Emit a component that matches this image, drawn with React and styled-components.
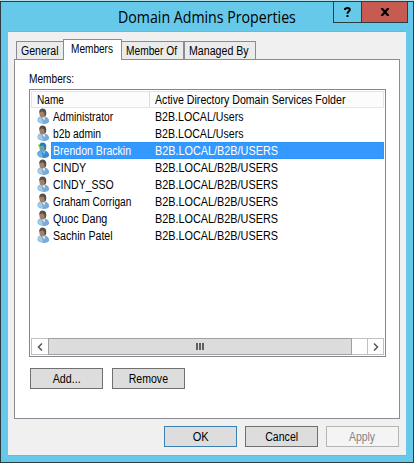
import React from "react";
import styled, { createGlobalStyle } from "styled-components";

const Global = createGlobalStyle`
  *, *::before, *::after { box-sizing: border-box; }
  body { margin: 0; overflow: hidden; background: #fff; }
  button { margin: 0; padding: 0; border-radius: 0; }
`;

const Window = styled.main`
  width: 414px;
  height: 463px;
  padding: 0 7px 6px;
  display: flex;
  flex-direction: column;
  background: #66c9ea;
  border: 1px solid #2d3b43;
  border-top: 0;
  font: 12px/17px "Liberation Sans", Arial, sans-serif;
  color: #000;
`;

const Backdrop = styled.div`
  height: 2px;
  margin: 0 -8px;
  flex: none;
  background: #b9dde4;
  border-bottom: 1px solid #2d3b43;
`;

const TitleBar = styled.header`
  height: 29px;
  margin-right: -2px;
  flex: none;
  display: flex;
  justify-content: flex-end;
  align-items: flex-start;
`;

const Title = styled.h1`
  margin: 0 auto 0 110px;
  width: 180px;
  font: 400 16px/30px "Open Sans", "Noto Sans", sans-serif;
  white-space: nowrap;
  transform: scaleX(0.886);
  transform-origin: left;
`;

const CaptionButton = styled.button`
  width: ${(p) => p.$w}px;
  height: 21px;
  margin-left: -1px;
  border: 1px solid #2d3b43;
  border-top: 0;
  background: ${(p) => p.$bg || "#66c9ea"};
  display: flex;
  align-items: center;
  justify-content: center;
`;

const Client = styled.section`
  flex: 1;
  display: flex;
  flex-direction: column;
  background: #f0f0f0;
  border-top: 1px solid #72b6d0;
  border-bottom: 1px solid #72b6d0;
  padding: 7px 6px 0;
`;

const Tabs = styled.nav`
  display: flex;
  align-items: flex-end;
  height: 20px;
  padding-left: 2px;
  position: relative;
  z-index: 1;
`;

const Tab = styled.button`
  width: ${(p) => p.$w}px;
  height: ${(p) => (p.$active ? 21 : 18)}px;
  margin-left: ${(p) => p.$ml || 0}px;
  margin-bottom: ${(p) => (p.$active ? -1 : 0)}px;
  border: 1px solid #8b8b94;
  border-bottom: 0;
  background: ${(p) => (p.$active ? "#fff" : "#ebebeb")};
  font: inherit;
  color: inherit;
  text-align: left;
  padding: ${(p) => (p.$active ? "0 0 1px 7px" : "1px 0 0 4px")};
`;

const Text = styled.span`
  display: inline-block;
  white-space: pre;
  transform: scaleX(${(p) => p.$sx});
  transform-origin: ${(p) => (p.$center ? "center" : "left")};
`;

const Panel = styled.div`
  height: 360px;
  background: #fff;
  border: 1px solid #8b8b94;
  padding: 11px 13px 0 14px;
`;

const Caption = styled.div`
  height: 18px;
`;

const List = styled.div`
  height: 268px;
  display: flex;
  flex-direction: column;
  border: 1px solid #828790;
  padding: 1px;
`;

const Header = styled.div`
  display: flex;
  height: 17px;
  background: #fcfcfc;
  border: 1px solid #e5e5e5;
`;

const HeaderCell = styled.div`
  width: ${(p) => p.$w}px;
  padding-left: 5px;
  line-height: 17px;
  border-right: ${(p) => (p.$last ? 0 : 1)}px solid #dedede;
`;

const Row = styled.div`
  display: flex;
  height: 17px;
  padding-left: 5px;
`;

const Cells = styled.div`
  flex: 1;
  display: grid;
  grid-template-columns: 102px 1fr;
  padding: 1px 0 0 2px;
  line-height: 17px;
  color: ${(p) => (p.$selected ? "#fff" : "#000")};
  background: ${(p) => (p.$selected ? "#3399ff" : "transparent")};
  outline: ${(p) => (p.$selected ? "1px dotted #b66d2d" : "none")};
  outline-offset: -1px;
`;

const Scrollbar = styled.div`
  margin-top: auto;
  height: 17px;
  display: flex;
  justify-content: space-between;
  border: 1px solid #c0c0c0;
`;

const Arrow = styled.div`
  width: 16px;
  display: flex;
  align-items: center;
  justify-content: center;
  border-left: ${(p) => (p.$right ? "1px solid #c0c0c0" : 0)};
`;

const Thumb = styled.div`
  width: 304px;
  margin: -1px auto -1px 0;
  border: 1px solid #a0a0a0;
  background: #dcdcdc;
  display: flex;
  align-items: center;
  justify-content: center;
`;

const Actions = styled.div`
  display: flex;
  gap: ${(p) => p.$gap}px;
  margin: ${(p) => p.$m};
  justify-content: ${(p) => (p.$end ? "flex-end" : "flex-start")};
`;

const Button = styled.button`
  width: 73px;
  height: 21px;
  line-height: 18px;
  font-family: inherit;
  font-size: 12px;
  border: 1px solid ${(p) => p.$border || "#707070"};
  background: ${(p) => (p.disabled ? "#f4f4f4" : "#ddd")};
  color: ${(p) => (p.disabled ? "#838383" : "#000")};
`;

const UserSvg = styled.svg`
  width: 15px;
  height: 17px;
  flex: none;
`;

function UserIcon({ selected }) {
  return (
    <UserSvg viewBox="0 0 15 17">
      <path d="M1.5 13Q1 9.4 4.5 8.2L9 8.6Q13 9.6 13.2 13.8Q12 16.2 8 15.9Q2.5 15.4 1.5 13Z" fill={selected ? "#3a8bd3" : "#78acd6"} />
      <path d="M2 12.8Q2 9.7 5 8.8L7 15.2Q3 14.8 2 12.8Z" fill={selected ? "#62b5ee" : "#a6cce8"} />
      <path d="M5.5 8.6L9 9.2L8.4 12.4Z" fill={selected ? "#8ac9f4" : "#f4f6f6"} />
      <ellipse cx="6.7" cy="5.2" rx="3.3" ry="4.3" fill={selected ? "#6ba3a5" : "#a58064"} />
      <path d="M3.3 5Q2.8 .4 6.8 .4Q11 .7 10.2 6.4Q9.3 9 8.5 7.5Q8.8 4 6.5 3.5Q4.3 3.2 3.3 5Z" fill={selected ? "#287fab" : "#55504c"} />
      {selected && <path d="M3 2L2.3 4.5M1.5 10L1 12.5M3 15H4.5" stroke="#b5df3c" strokeWidth="1" fill="none" />}
    </UserSvg>
  );
}

const ROWS = [
  ["Administrator", 0.85, "B2B.LOCAL/Users", 0.885],
  ["b2b admin", 0.857, "B2B.LOCAL/Users", 0.885],
  ["Brendon Brackin", 0.88, "B2B.LOCAL/B2B/USERS", 0.904],
  ["CINDY", 0.89, "B2B.LOCAL/B2B/USERS", 0.904],
  ["CINDY_SSO", 0.875, "B2B.LOCAL/B2B/USERS", 0.904],
  ["Graham Corrigan", 0.845, "B2B.LOCAL/B2B/USERS", 0.904],
  ["Quoc Dang", 0.895, "B2B.LOCAL/B2B/USERS", 0.904],
  ["Sachin Patel", 0.885, "B2B.LOCAL/B2B/USERS", 0.904],
];

export default function App() {
  return (
    <>
      <Global />
      <Window>
        <Backdrop />
        <TitleBar>
          <Title>Domain Admins Properties</Title>
          <CaptionButton $w={29} aria-label="Help">
            <svg width="7" height="10" viewBox="0 0 7 10">
              <path d="M1 3V2Q1.5 1 3.5 1Q5.8 1 5.8 2.8Q5.8 4 4.5 4.6Q3.5 5.2 3.5 6.7M3.5 8V10" fill="none" stroke="#000" strokeWidth="2" />
            </svg>
          </CaptionButton>
          <CaptionButton $w={47} $bg="#c75b52" aria-label="Close">
            <svg width="10" height="8" viewBox="0 0 10 8">
              <path d="M1.5 0L8.5 8M8.5 0L1.5 8" fill="none" stroke="#000" strokeWidth="2.2" />
            </svg>
          </CaptionButton>
        </TitleBar>
        <Client>
          <Tabs>
            <Tab $w={48}><Text $sx={0.88}>General</Text></Tab>
            <Tab $w={59} $ml={-1} $active><Text $sx={0.84}>Members</Text></Tab>
            <Tab $w={63} $ml={-1}><Text $sx={0.85}>Member Of</Text></Tab>
            <Tab $w={72}><Text $sx={0.885}>Managed By</Text></Tab>
          </Tabs>
          <Panel>
            <Caption><Text $sx={0.845}>Members:</Text></Caption>
            <List>
              <Header>
                <HeaderCell $w={118}><Text $sx={0.84}>Name</Text></HeaderCell>
                <HeaderCell $w={220} $last>
                  <Text $sx={0.884}>Active Directory Domain Services Folder</Text>
                </HeaderCell>
              </Header>
              {ROWS.map(([name, nameScale, folder, folderScale]) => {
                const selected = name === "Brendon Brackin";
                return (
                  <Row key={name}>
                    <UserIcon selected={selected} />
                    <Cells $selected={selected}>
                      <Text $sx={nameScale}>{name}</Text>
                      <Text $sx={folderScale}>{folder}</Text>
                    </Cells>
                  </Row>
                );
              })}
              <Scrollbar>
                <Arrow>
                  <svg width="6" height="8" viewBox="0 0 6 8"><path d="M5 .5L1.5 4L5 7.5" fill="none" stroke="#555" strokeWidth="1.5" /></svg>
                </Arrow>
                <Thumb>
                  <svg width="8" height="7" viewBox="0 0 8 7"><path d="M1 0V7M4 0V7M7 0V7" stroke="#606060" strokeWidth="2" shapeRendering="crispEdges" /></svg>
                </Thumb>
                <Arrow $right>
                  <svg width="6" height="8" viewBox="0 0 6 8"><path d="M1 .5L4.5 4L1 7.5" fill="none" stroke="#555" strokeWidth="1.5" /></svg>
                </Arrow>
              </Scrollbar>
            </List>
            <Actions $gap={9} $m="11px 0 0 1px">
              <Button><Text $center $sx={0.89}>Add...</Text></Button>
              <Button><Text $center $sx={0.88}>Remove</Text></Button>
            </Actions>
          </Panel>
          <Actions $end $gap={8} $m="7px 1px 0 0">
            <Button $border="#3c7fb1"><Text $center $sx={0.92}>OK</Text></Button>
            <Button><Text $center $sx={0.88}>Cancel</Text></Button>
            <Button disabled $border="#b5b5b5"><Text $center $sx={0.87}>Apply</Text></Button>
          </Actions>
        </Client>
      </Window>
    </>
  );
}
